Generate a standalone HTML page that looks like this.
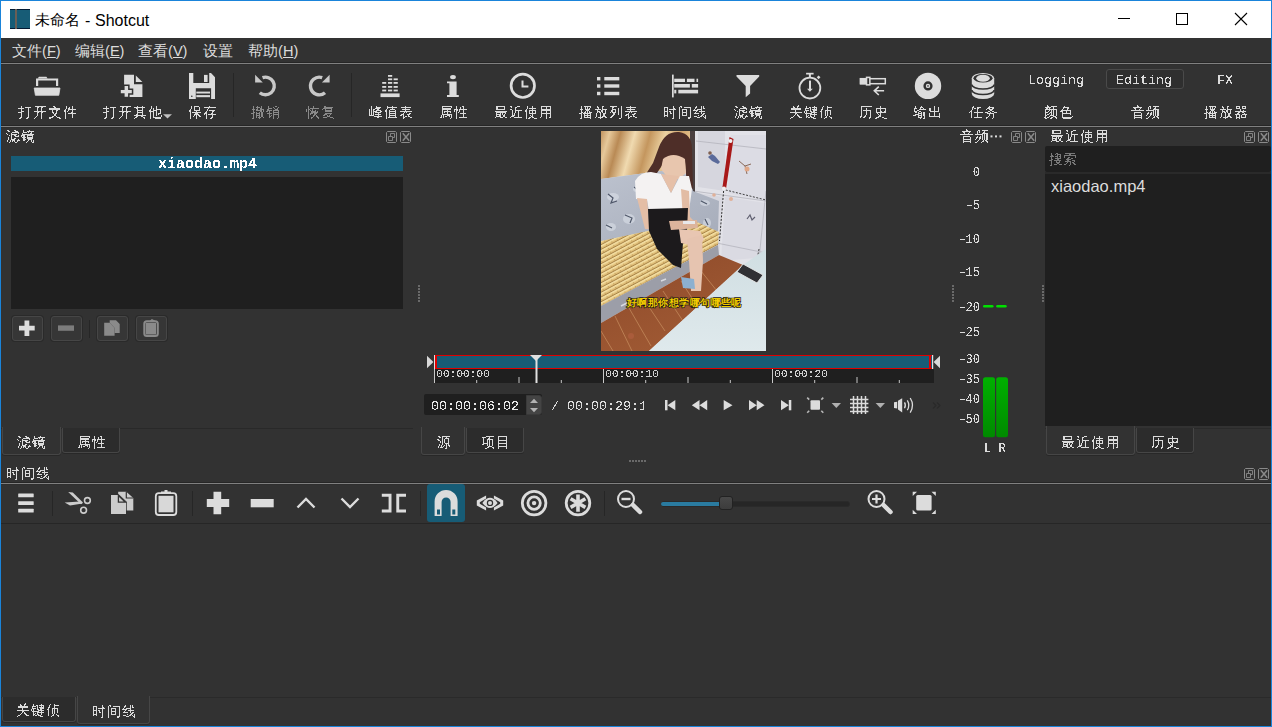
<!DOCTYPE html>
<html><head><meta charset="utf-8">
<style>
*{margin:0;padding:0;box-sizing:border-box}
html,body{width:1272px;height:727px;overflow:hidden;background:#323232;font-family:"Liberation Sans",sans-serif;color:#dcdcdc}
.a{position:absolute;white-space:nowrap;line-height:1;filter:url(#crisp)}
.ct{filter:none}
.b{position:absolute}
.m{font-family:"Liberation Mono",monospace}
.t15{font-size:15px}
.lbl{font-size:15px;color:#dcdcdc}
.dis{color:#8a8a8a}
.sep{position:absolute;background:#808080;height:1px;box-shadow:0 -1px 0 #262626,0 1px 0 #2e2e2e}
.vsep{position:absolute;width:1px;background:#262626}
.tab{position:absolute;border:1px solid #464646;border-top:none;border-radius:0 0 3px 3px;background:#2c2c2c;box-shadow:0 1px 0 #282828}
.tab.sel{background:#323232}
.dbtn{position:absolute;width:11px;height:11px;border:1px solid #9a9a9a;border-radius:2px}
</style></head><body>
<svg width="0" height="0" style="position:absolute"><filter id="crisp"><feComponentTransfer><feFuncA type="discrete" tableValues="0 0 1 1"/></feComponentTransfer></filter></svg>
<!-- window border -->
<div class="b" style="left:0;top:0;width:1272px;height:727px;border:1px solid #1a84da;z-index:50;pointer-events:none"></div>
<!-- title bar -->
<div class="b" style="left:0;top:0;width:1272px;height:38px;background:#fff"></div>
<div class="b" style="left:10px;top:9px;width:20px;height:20px;background:#175c76;border-top:1px solid #021a33;border-bottom:1px solid #021a33"></div>
<div class="b" style="left:15px;top:9px;width:1.6px;height:20px;background:#6a5e55"></div>
<div class="a ct" style="left:35px;top:13px;font-size:14.5px;color:#000">未命名</div><div class="a ct" style="left:85px;top:13px;font-size:16px;color:#000">-</div><div class="a ct" style="left:95px;top:13px;font-size:16px;color:#000">Shotcut</div>
<div class="b" style="left:1118px;top:18px;width:12px;height:1px;background:#000"></div>
<div class="b" style="left:1176px;top:13px;width:12px;height:12px;border:1px solid #000"></div>
<svg class="b" style="left:1234px;top:12px" width="14" height="14"><path d="M1 1L13 13M13 1L1 13" stroke="#000" stroke-width="1.1"/></svg>

<!-- menu bar -->
<div class="a ct" style="left:12px;top:43.5px;font-size:14.6px">文件(<u>F</u>)</div>
<div class="a ct" style="left:75px;top:43.5px;font-size:14.6px">编辑(<u>E</u>)</div>
<div class="a ct" style="left:138px;top:43.5px;font-size:14.6px">查看(<u>V</u>)</div>
<div class="a ct" style="left:203px;top:43.5px;font-size:14.6px">设置</div>
<div class="a ct" style="left:248px;top:43.5px;font-size:14.6px">帮助(<u>H</u>)</div>
<div class="sep" style="left:1px;top:63px;width:1270px"></div>

<!-- toolbar -->
<div class="a lbl" style="left:18px;top:105px;font-size:14px;letter-spacing:1px">打开文件</div>
<div class="a lbl" style="left:103px;top:105px;font-size:14px;letter-spacing:1px">打开其他</div>
<div class="a lbl" style="left:188px;top:105px;font-size:14px;letter-spacing:1px">保存</div>
<div class="a lbl dis" style="left:251px;top:105px;font-size:14px;letter-spacing:1px">撤销</div>
<div class="a lbl dis" style="left:306px;top:105px;font-size:14px;letter-spacing:1px">恢复</div>
<div class="a lbl" style="left:369px;top:105px;font-size:14px;letter-spacing:1px">峰值表</div>
<div class="a lbl" style="left:439px;top:105px;font-size:14px;letter-spacing:1px">属性</div>
<div class="a lbl" style="left:494px;top:105px;font-size:14px;letter-spacing:1px">最近使用</div>
<div class="a lbl" style="left:579px;top:105px;font-size:14px;letter-spacing:1px">播放列表</div>
<div class="a lbl" style="left:663px;top:105px;font-size:14px;letter-spacing:1px">时间线</div>
<div class="a lbl" style="left:734px;top:105px;font-size:14px;letter-spacing:1px">滤镜</div>
<div class="a lbl" style="left:789px;top:105px;font-size:14px;letter-spacing:1px">关键侦</div>
<div class="a lbl" style="left:859px;top:105px;font-size:14px;letter-spacing:1px">历史</div>
<div class="a lbl" style="left:913px;top:105px;font-size:14px;letter-spacing:1px">输出</div>
<div class="a lbl" style="left:969px;top:105px;font-size:14px;letter-spacing:1px">任务</div>
<div class="a lbl" style="left:1044px;top:105px;font-size:14px;letter-spacing:1px">颜色</div>
<div class="a lbl" style="left:1131px;top:105px;font-size:14px;letter-spacing:1px">音频</div>
<div class="a lbl" style="left:1204px;top:105px;font-size:14px;letter-spacing:1px">播放器</div>
<div class="a m" style="left:1028px;top:74px;font-size:13.33px">Logging</div>
<div class="b" style="left:1106px;top:69px;width:78px;height:20px;border:1px solid #4a4a4a;border-radius:3px;background:#2f2f2f"></div>
<div class="a m" style="left:1116px;top:74px;font-size:13.33px">Editing</div>
<div class="a m" style="left:1217px;top:74px;font-size:13.33px">FX</div>
<div class="vsep" style="left:233px;top:73px;height:44px"></div>
<div class="vsep" style="left:351px;top:73px;height:44px"></div>
<svg class="b" style="left:0;top:0" width="1272" height="130" fill="#dcdcdc">
<!-- folder -->
<path d="M37.5 78.6L39 76.8H46.4L47.6 78.6Z"/>
<path d="M37.1 86V79.5H57.1V86" fill="none" stroke="#dcdcdc" stroke-width="2.2"/>
<path d="M34.2 88H60L58.8 95.3H35.4Z" stroke="#dcdcdc" stroke-width="0.8" stroke-linejoin="round"/>
<!-- open other -->
<path d="M124.1 74.8H134V84.2H142.4V97.1H124.1Z"/>
<path d="M135.8 75.5L142.4 82.1H135.8Z"/>
<path d="M120.8 90H124.6V86.1H128.1V90H131.8V93.3H128.1V96.8H124.6V93.3H120.8Z" stroke="#323232" stroke-width="3" paint-order="stroke"/>
<!-- save -->
<path fill-rule="evenodd" d="M189 73H211L215 77.2V99H189Z M193.3 73H209.2V82.9H193.3Z M195.8 88.3H211.1V99H195.8Z"/>
<rect x="204" y="74.9" width="3.6" height="7.1"/>
<rect x="196.3" y="91.6" width="13.7" height="1.9"/><rect x="196.3" y="95.1" width="13.7" height="2.1"/>
<circle cx="191.8" cy="96.2" r="0.8" fill="#323232"/>
<!-- undo -->
<path d="M262.5 77.7A8.8 8.8 0 1 1 259.8 92.7" fill="none" stroke="#c8c8c8" stroke-width="3.4"/>
<path d="M255.1 74.7V82.5H262.8Z" fill="#c8c8c8"/>
<!-- redo -->
<path d="M322.2 77.7A8.8 8.8 0 1 0 325 92.7" fill="none" stroke="#c8c8c8" stroke-width="3.4"/>
<path d="M329.6 74.7V82.5H321.9Z" fill="#c8c8c8"/>
<!-- peak meter -->
<rect x="380.5" y="93.4" width="19.1" height="3.7"/>
<rect x="388" y="75" width="4.2" height="1.8"/>
<rect x="388" y="78.4" width="4.2" height="1.8"/><rect x="393.6" y="78.4" width="4.2" height="1.8"/>
<rect x="382.2" y="82" width="4" height="1.8"/><rect x="388" y="82" width="4.2" height="1.8"/><rect x="393.6" y="82" width="4.2" height="1.8"/>
<rect x="382.2" y="86" width="4" height="1.8"/><rect x="388" y="86" width="4.2" height="1.8"/><rect x="393.6" y="86" width="4.2" height="1.8"/>
<rect x="382.2" y="89.6" width="4" height="1.8"/><rect x="388" y="89.6" width="4.2" height="1.8"/><rect x="393.6" y="89.6" width="4.2" height="1.8"/>
<!-- info -->
<ellipse cx="453" cy="77.1" rx="2.9" ry="2.2"/>
<path d="M447 81.4H456.6V95H458.8V97H447V95H449.4V83.2H447Z"/>
<!-- clock -->
<circle cx="522.8" cy="85.8" r="11.7" fill="none" stroke="#dcdcdc" stroke-width="2.7"/>
<path d="M521.5 80.4H523.5V85.5H528.4V87.5H521.5Z"/>
<!-- list -->
<rect x="597" y="77" width="3.4" height="3.4"/><rect x="597" y="84.3" width="3.4" height="3.4"/><rect x="597" y="91.8" width="3.4" height="3.4"/>
<rect x="604.3" y="77" width="15" height="3.4"/><rect x="604.3" y="84.3" width="15" height="3.4"/><rect x="604.3" y="91.8" width="15" height="3.4"/>
<!-- timeline -->
<rect x="672" y="74.6" width="1.7" height="22.8"/>
<rect x="674.2" y="78.7" width="10.8" height="3.3"/><rect x="686.9" y="78.7" width="7.6" height="3.3"/><rect x="696.5" y="78.7" width="1.6" height="3.3"/>
<rect x="674.2" y="84" width="15.7" height="3.6"/><rect x="691.8" y="84" width="6.3" height="3.6"/>
<rect x="674.2" y="89.8" width="2.1" height="3.6"/><rect x="678.3" y="89.8" width="19.8" height="3.6"/>
<!-- filter -->
<path d="M736.5 74.9H759.2V76.6L750.1 86V93.5L745.7 97.2V86L736.5 76.6Z"/>
<!-- stopwatch -->
<circle cx="809.9" cy="88.1" r="10.4" fill="none" stroke="#dcdcdc" stroke-width="1.8"/>
<rect x="806.1" y="72.8" width="7.5" height="1.7"/><rect x="808.9" y="74" width="2" height="3.5"/>
<rect x="817.3" y="76" width="2.6" height="2.6" transform="rotate(45 818.6 77.3)"/>
<rect x="809" y="80.6" width="2" height="8.5"/><path d="M807 88.8H812.8L809.9 91.8Z"/>
<!-- history -->
<rect x="860.5" y="78.7" width="24.8" height="5" fill="none" stroke="#dcdcdc" stroke-width="1.5"/>
<rect x="859.8" y="78" width="7" height="6.4"/>
<rect x="865.8" y="76.6" width="4.8" height="9"/><rect x="867.3" y="78.2" width="1.8" height="5.9" fill="#323232"/>
<path d="M884.1 90.8H874.5M878.8 86.6L874.3 90.8L878.8 95" fill="none" stroke="#dcdcdc" stroke-width="1.6"/>
<!-- disc -->
<circle cx="928" cy="85.9" r="13.2"/>
<circle cx="928" cy="85.9" r="3.4" fill="none" stroke="#323232" stroke-width="2.4"/>
<circle cx="928" cy="85.9" r="0.9" fill="#555"/>
<!-- jobs -->
<path d="M971.8 78.2A11.2 5.2 0 0 1 994.2 78.2V93.8A11.2 5.2 0 0 1 971.8 93.8Z"/>
<ellipse cx="983" cy="78.3" rx="9.6" ry="4.2" fill="#323232"/>
<ellipse cx="983" cy="78.3" rx="6.8" ry="3.5"/>
<path d="M971.8 84.5A11.2 4.5 0 0 0 994.2 84.5M971.8 90A11.2 4.5 0 0 0 994.2 90" fill="none" stroke="#323232" stroke-width="1.6"/>
<!-- dropdown arrow 打开其他 -->
<path d="M163 114.2H172L167.5 118.6Z" fill="#c0c0c0"/>
</svg>
<div class="sep" style="left:1px;top:126px;width:1270px"></div>

<div class="a" style="left:6px;top:129px;font-size:14px;letter-spacing:1px">滤镜</div>
<svg class="b" style="left:386px;top:131px" width="26" height="12">
<path d="M1.5 0.5H9.5L10.5 1.5V10.5L9.5 11.5H1.5L0.5 10.5V1.5Z" fill="none" stroke="#8a8a8a"/>
<path d="M2.5 5.5H6.5V9.5H2.5Z M4.5 5.5V2.5H8.5V6.5H6.5" fill="none" stroke="#8a8a8a" stroke-width="0.9"/>
<path d="M15.5 0.5H23.5L24.5 1.5V10.5L23.5 11.5H15.5L14.5 10.5V1.5Z" fill="none" stroke="#8a8a8a"/>
<path d="M16.8 2.3L23.2 9.7M23.2 2.3L16.8 9.7" stroke="#8a8a8a" stroke-width="1.5"/>
</svg>
<div class="b" style="left:11px;top:156px;width:392px;height:15px;background:#175c76"></div>
<div class="a m" style="left:158px;top:157px;font-size:15px;font-weight:bold;color:#fff">xiaodao.mp4</div>
<div class="b" style="left:11px;top:177px;width:392px;height:132px;background:#1f1f1f"></div>
<div class="b" style="left:12px;top:316px;width:31px;height:25px;border:1px solid #464646;border-radius:3px;background:#363636;box-shadow:0 0 0 1px #2a2a2a"></div>
<div class="b" style="left:51px;top:316px;width:31px;height:25px;border:1px solid #464646;border-radius:3px;background:#363636;box-shadow:0 0 0 1px #2a2a2a"></div>
<div class="b" style="left:97px;top:316px;width:31px;height:25px;border:1px solid #464646;border-radius:3px;background:#363636;box-shadow:0 0 0 1px #2a2a2a"></div>
<div class="b" style="left:136px;top:316px;width:31px;height:25px;border:1px solid #464646;border-radius:3px;background:#363636;box-shadow:0 0 0 1px #2a2a2a"></div>
<div class="vsep" style="left:89px;top:320px;height:18px;background:#262626"></div>
<svg class="b" style="left:0;top:300px" width="200" height="50">
<path d="M24.5 20.4H29.3V25.8H34.7V30.6H29.3V36H24.5V30.6H19V25.8H24.5Z" fill="#dcdcdc"/>
<rect x="58" y="25.4" width="16" height="5.4" fill="#7c7c7c"/>
<path d="M109.7 20.2H116L119.7 24V33H114.6V27.9L109.7 22.8Z" fill="#8a8a8a"/>
<path d="M104.2 22.8H109.8L114.6 27.9V35.7H104.2Z" fill="#8a8a8a"/>
<rect x="144.3" y="21.2" width="13.5" height="14.7" rx="2.5" fill="none" stroke="#8a8a8a" stroke-width="2"/>
<rect x="145.7" y="22.8" width="10.4" height="11.7" fill="#8a8a8a"/>
<path d="M148.7 22H154.9V20.5L151.8 19Z" fill="#8a8a8a"/>
</svg>
<svg class="b" style="left:418px;top:285px" width="2" height="18" fill="#6a6a6a"><rect x="0" y="0" width="2" height="2"/><rect x="0" y="3" width="2" height="2"/><rect x="0" y="6" width="2" height="2"/><rect x="0" y="9" width="2" height="2"/><rect x="0" y="12" width="2" height="2"/><rect x="0" y="15" width="2" height="2"/></svg>
<div class="b" style="left:1px;top:428px;width:412px;height:1px;background:#292929"></div>
<div class="tab sel" style="left:2px;top:427px;width:59px;height:28px"></div>
<div class="tab" style="left:62px;top:428px;width:58px;height:25px"></div>
<div class="a" style="left:17px;top:435px;font-size:14px;letter-spacing:1px">滤镜</div>
<div class="a" style="left:77px;top:435px;font-size:14px;letter-spacing:1px">属性</div>
<div class="a" style="left:6px;top:466px;font-size:14px;letter-spacing:1px">时间线</div>
<svg class="b" style="left:1244px;top:468px" width="26" height="12">
<path d="M1.5 0.5H9.5L10.5 1.5V10.5L9.5 11.5H1.5L0.5 10.5V1.5Z" fill="none" stroke="#8a8a8a"/>
<path d="M2.5 5.5H6.5V9.5H2.5Z M4.5 5.5V2.5H8.5V6.5H6.5" fill="none" stroke="#8a8a8a" stroke-width="0.9"/>
<path d="M15.5 0.5H23.5L24.5 1.5V10.5L23.5 11.5H15.5L14.5 10.5V1.5Z" fill="none" stroke="#8a8a8a"/>
<path d="M16.8 2.3L23.2 9.7M23.2 2.3L16.8 9.7" stroke="#8a8a8a" stroke-width="1.5"/>
</svg>
<div class="sep" style="left:1px;top:483px;width:1270px"></div>
<svg class="b" style="left:601px;top:131px" width="165" height="220" viewBox="0 0 165 220">
<defs>
<linearGradient id="cur" x1="0" y1="0" x2="1" y2="0.15">
<stop offset="0" stop-color="#c29460"/><stop offset="0.1" stop-color="#e6c89a"/><stop offset="0.22" stop-color="#b98a55"/><stop offset="0.38" stop-color="#f0dab0"/><stop offset="0.55" stop-color="#c4965e"/><stop offset="0.72" stop-color="#ecd2a2"/><stop offset="0.88" stop-color="#d0a46c"/><stop offset="1" stop-color="#e4c08a"/>
</linearGradient>
<pattern id="bam" width="6" height="4.2" patternUnits="userSpaceOnUse" patternTransform="rotate(-28)">
<rect width="6" height="4.2" fill="#e6c680"/><rect y="0" width="6" height="1.6" fill="#f2dca0"/><rect y="3.2" width="6" height="1" fill="#a88448"/><rect x="5" y="1.6" width="1" height="1.6" fill="#c8a460"/>
</pattern>
<linearGradient id="flr" x1="0" y1="0" x2="0.6" y2="1"><stop offset="0" stop-color="#8e4a2a"/><stop offset="1" stop-color="#a05a34"/></linearGradient>
<linearGradient id="tbl" x1="0" y1="0" x2="0" y2="1"><stop offset="0" stop-color="#d0dee2"/><stop offset="1" stop-color="#dfe9ec"/></linearGradient>
<linearGradient id="sofa" x1="0" y1="0" x2="1" y2="1"><stop offset="0" stop-color="#bcc2ce"/><stop offset="1" stop-color="#a6acba"/></linearGradient>
</defs>
<rect width="165" height="220" fill="#dcdde2"/>
<!-- cabinets right -->
<path d="M90 0H165V150L140 133L90 120Z" fill="#e2e2e8"/>
<path d="M97 0H124V60L97 56Z" fill="#d6d6de"/><path d="M130 4H165V70L127 62Z" fill="#dcdce4"/>
<path d="M98 62L122 66L118 128L98 122Z" fill="#d8d8e0"/><path d="M124 66L165 72V126L120 130Z" fill="#dadae2"/>
<path d="M95 10L165 18M92 60L165 70M96 108L165 122M165 60L158 128" stroke="#b4b4bc" stroke-width="0.8" fill="none"/>
<path d="M122.6 60L118.5 110" stroke="#303030" stroke-width="1" stroke-dasharray="2 1.5"/>
<path d="M124.7 59L165 69" stroke="#303030" stroke-width="0.9" stroke-dasharray="2 1.5"/>
<path d="M158 118L150 160" stroke="#303030" stroke-width="0.9" stroke-dasharray="2 1.5"/>
<path d="M128.5 6L132.5 8L125 58L121.5 56Z" fill="#a81818"/>
<circle cx="129.5" cy="10" r="2" fill="#f0f0f0"/><circle cx="123" cy="57.5" r="2" fill="#f0f0f0"/>
<path d="M107 26l4 -3l3 2l5 6l-2 2l-6 -3Z" fill="#5a6a9a"/><circle cx="109" cy="22" r="1.8" fill="#806050"/>
<path d="M138 30l6 5l6 -2M144 35l2 8" stroke="#8a6a5a" stroke-width="1" fill="none"/><circle cx="146" cy="38" r="2.5" fill="#e0a888"/>
<circle cx="113" cy="64" r="1.8" fill="#e0b098"/><circle cx="130" cy="68" r="2" fill="#e0b098"/>
<path d="M146 88l3 -4l2 5l3 -3M104 100l3 4l3 -3" stroke="#606070" stroke-width="1.2" fill="none"/>
<rect x="88" y="0" width="6" height="80" fill="#4a4040"/>
<!-- curtain -->
<path d="M0 0H89V38L60 40L0 48Z" fill="url(#cur)"/>
<!-- sofa back -->
<path d="M0 48L60 40L88 44L92 60L118 70L117 101L60 100L0 112Z" fill="url(#sofa)"/>
<g fill="#dfe4ec" opacity="0.55"><ellipse cx="12" cy="66" rx="6" ry="4"/><ellipse cx="28" cy="88" rx="6" ry="5"/><ellipse cx="10" cy="96" rx="5" ry="4"/><ellipse cx="36" cy="58" rx="4" ry="3"/><ellipse cx="104" cy="72" rx="5" ry="3"/><ellipse cx="106" cy="92" rx="4" ry="5"/></g>
<path d="M7 63l5 4l-2 5l6 -2M24 84l7 3l-2 5M5 94l6 3M33 56l5 4M100 70l6 3M104 88l3 6" stroke="#50586a" stroke-width="1.2" fill="none"/>
<!-- bamboo seat -->
<path d="M0 110L70 95L96 91L118 101L117 114L0 175Z" fill="url(#bam)"/>
<!-- sofa base -->
<path d="M0 175L117 114L118 124L0 192Z" fill="#9c9ea8"/>
<path d="M20 175l6 -3M60 150l5 -2M90 132l4 -1" stroke="#d8dae0" stroke-width="1.4"/>
<!-- floor -->
<path d="M0 192L118 124L142 134L48 220H0Z" fill="url(#flr)"/>
<path d="M28 177L50 215M14 185L31 220M44 170L64 200M62 160L82 190M80 150L98 178M100 140L116 160M0 200L12 220" stroke="#d09a68" stroke-width="0.7" opacity="0.85" fill="none"/>
<circle cx="30" cy="205" r="3" fill="#b06040" opacity="0.7"/>
<!-- table -->
<path d="M48 220L142 134L165 118V220Z" fill="url(#tbl)"/>
<!-- phone -->
<path d="M136 141L142 133L162 144L156 152Z" fill="#303034" stroke="#e8e8e8" stroke-width="0.9"/>
<!-- woman: hair -->
<path d="M58 16Q64 0 78 1Q91 3 91 18L92 58L86 54L84 32Q76 22 64 30L56 42L43 46L52 32Z" fill="#4e2e28"/>
<!-- face -->
<path d="M62 28Q72 20 84 28L85 42L78 48L67 47L60 38Z" fill="#e8c6ae"/>
<!-- white top -->
<path d="M34 50Q39 41 50 41L60 43L70 62L79 45L88 45L91 58L88 80L48 80L46 69L35 68Z" fill="#f4f2f2"/>
<path d="M60 43L70 62L78 45Z" fill="#e6c0a8"/>
<!-- left arm -->
<path d="M36 67L46 68L48 90L64 95L64 99L44 98Z" fill="#e4bea6"/>
<!-- right arm -->
<path d="M80 58L88 60L89 86L95 92L88 95L82 88Z" fill="#e2bca4"/>
<!-- skirt -->
<path d="M47 78L87 77L86 100L80 100L82 112L80 137L72 134L56 118L48 100Z" fill="#1c1a1c"/>
<!-- thigh + shin -->
<path d="M78 98L99 100L103 108L98 116L80 112Z" fill="#e8c6b2"/>
<path d="M86 108L101 104L102 130L100 160L90 160L88 130Z" fill="#e6c4b0"/>
<!-- hands -->
<path d="M68 90L96 89L97 97L70 99Z" fill="#dcb49c"/>
<path d="M82 90L94 90L94 93L82 93Z" fill="#e8e8ea"/>
<!-- slipper -->
<path d="M80 146L93 148L94 158L82 157Z" fill="#8cb0d0"/>
<!-- subtitle -->
<text x="83.4" y="175.3" text-anchor="middle" font-family="Liberation Sans" font-size="10.2" font-weight="bold" fill="#f2cc00" stroke="#151515" stroke-width="1.3" paint-order="stroke" letter-spacing="0.45">好啊那你想学哪句哪些呢</text>
</svg>
<svg class="b" style="left:420px;top:350px" width="530" height="40"><path d="M7 5.7L13.4 12L7 18.3Z" fill="#d8d8d8"/><path d="M520 5.7L513.6 12L520 18.3Z" fill="#d8d8d8"/><rect x="14" y="19" width="500" height="14" fill="#1f1f1f"/><rect x="14" y="5" width="498" height="14" fill="#175c76"/><rect x="14" y="5" width="498" height="1" fill="#e00000"/><rect x="14" y="18" width="498" height="1" fill="#e00000"/><rect x="15" y="5" width="2" height="14" fill="#e00000"/><rect x="509" y="5" width="2" height="14" fill="#e00000"/><rect x="14" y="5" width="1" height="28" fill="#e0e0e0"/><rect x="512" y="5" width="1.2" height="14" fill="#e0e0e0"/><rect x="14.0" y="19" width="1" height="14" fill="#c8c8c8"/><rect x="56.2" y="30" width="1" height="3" fill="#c8c8c8"/><rect x="98.5" y="27" width="1" height="6" fill="#c8c8c8"/><rect x="140.8" y="30" width="1" height="3" fill="#c8c8c8"/><rect x="183.0" y="19" width="1" height="14" fill="#c8c8c8"/><rect x="225.2" y="30" width="1" height="3" fill="#c8c8c8"/><rect x="267.5" y="27" width="1" height="6" fill="#c8c8c8"/><rect x="309.8" y="30" width="1" height="3" fill="#c8c8c8"/><rect x="352.0" y="19" width="1" height="14" fill="#c8c8c8"/><rect x="394.2" y="30" width="1" height="3" fill="#c8c8c8"/><rect x="436.5" y="27" width="1" height="6" fill="#c8c8c8"/><rect x="478.8" y="30" width="1" height="3" fill="#c8c8c8"/><path d="M110 5H122L116 11Z" fill="#e0e0e0"/><rect x="115.5" y="5" width="2" height="28" fill="#e0e0e0"/></svg>
<div class="a m" style="left:436px;top:369px;font-size:11.7px;color:#d0d0d0;letter-spacing:-0.3px">00:00:00</div>
<div class="a m" style="left:605px;top:369px;font-size:11.7px;color:#d0d0d0;letter-spacing:-0.3px">00:00:10</div>
<div class="a m" style="left:774px;top:369px;font-size:11.7px;color:#d0d0d0;letter-spacing:-0.3px">00:00:20</div>
<div class="b" style="left:424px;top:394px;width:118px;height:21px;background:#1f1f1f;border-radius:2px"></div>
<div class="b" style="left:526px;top:395px;width:16px;height:20px;background:#444;border:1px solid #3a3a3a;border-radius:0 3px 3px 0"></div>
<svg class="b" style="left:526px;top:395px" width="16" height="20"><path d="M4 8H12L8 3.8Z M4 13H12L8 17.2Z" fill="#b4b4b4"/></svg>
<div class="a m" style="left:431px;top:400px;font-size:13.33px;color:#e6e6e6">00:00:06:02</div>
<div class="a m" style="left:551px;top:400px;font-size:13.33px;color:#dcdcdc">/</div>
<div class="b" style="left:560px;top:394px;width:84px;height:22px;overflow:hidden"><div class="a m" style="left:7px;top:6px;font-size:13.33px;color:#dcdcdc">00:00:29:10</div></div>
<svg class="b" style="left:650px;top:385px" width="280" height="40" fill="#dcdcdc">
<rect x="15" y="15" width="2.5" height="10.3"/><path d="M25.3 15V25.3L17.5 20.15Z"/>
<path d="M41.8 20.15L49.5 15V25.3Z M49.5 20.15L57.2 15V25.3Z"/>
<path d="M73.7 15V25.3L82.5 20.15Z"/>
<path d="M99 15V25.3L106.7 20.15Z M106.7 15V25.3L114.5 20.15Z"/>
<path d="M131 15V25.3L138.8 20.15Z"/><rect x="138.8" y="15" width="2.5" height="10.3"/>
<rect x="160.5" y="15.3" width="9.5" height="9.5" rx="1"/>
<path d="M157.2 12.6L159.2 14.6M173.3 12.6L171.3 14.6M157.2 27.8L159.2 25.8M173.3 27.8L171.3 25.8" stroke="#b8b8b8" stroke-width="1.6" fill="none"/>
<path d="M181.6 18H191L186.3 23Z" fill="#b0b0b0"/>
<path d="M200 14.5H218.4M200 18.5H218.4M200 22.5H218.4M200 26.5H218.4M203.5 11V29M207.5 11V29M211.5 11V29M215.5 11V29" stroke="#dcdcdc" stroke-width="1.5"/>
<path d="M225.6 18H235L230.3 23Z" fill="#b0b0b0"/>
<path d="M244 17.3L247.2 16.8V23.6L244 23.1Z M248 15.8L252.2 13.2V27.4L248 24.6Z"/>
<path d="M254.5 17.3Q256.2 20.2 254.5 23.2M257.3 15.3Q260.3 20.2 257.3 25.2M260.2 13Q264.8 20.2 260.2 27.6" stroke="#dcdcdc" stroke-width="1.3" fill="none"/>
</svg>

<div class="tab sel" style="left:421px;top:427px;width:44px;height:28px"></div>
<div class="tab" style="left:466px;top:428px;width:58px;height:25px"></div>
<div class="a" style="left:437px;top:435px;font-size:14px;letter-spacing:1px">源</div>
<div class="a" style="left:481px;top:435px;font-size:14px;letter-spacing:1px">项目</div>
<svg class="b" style="left:629px;top:460px" width="18" height="2" fill="#6a6a6a"><rect x="0" y="0" width="2" height="2"/><rect x="3" y="0" width="2" height="2"/><rect x="6" y="0" width="2" height="2"/><rect x="9" y="0" width="2" height="2"/><rect x="12" y="0" width="2" height="2"/><rect x="15" y="0" width="2" height="2"/></svg>
<div class="a" style="left:960px;top:129px;font-size:14px;letter-spacing:1px">音频</div><svg class="b" style="left:990px;top:135px" width="12" height="3" fill="#dcdcdc"><rect x="0.5" y="0.4" width="2" height="2"/><rect x="5" y="0.4" width="2" height="2"/><rect x="9.5" y="0.4" width="2" height="2"/></svg>
<svg class="b" style="left:1011px;top:131px" width="26" height="12">
<path d="M1.5 0.5H9.5L10.5 1.5V10.5L9.5 11.5H1.5L0.5 10.5V1.5Z" fill="none" stroke="#8a8a8a"/>
<path d="M2.5 5.5H6.5V9.5H2.5Z M4.5 5.5V2.5H8.5V6.5H6.5" fill="none" stroke="#8a8a8a" stroke-width="0.9"/>
<path d="M15.5 0.5H23.5L24.5 1.5V10.5L23.5 11.5H15.5L14.5 10.5V1.5Z" fill="none" stroke="#8a8a8a"/>
<path d="M16.8 2.3L23.2 9.7M23.2 2.3L16.8 9.7" stroke="#8a8a8a" stroke-width="1.5"/>
</svg>
<div class="a m" style="left:939px;top:167px;width:41px;text-align:right;font-size:12px;color:#dcdcdc"> 0</div>
<div class="a m" style="left:939px;top:200px;width:41px;text-align:right;font-size:12px;color:#dcdcdc">−5</div>
<div class="a m" style="left:939px;top:234px;width:41px;text-align:right;font-size:12px;color:#dcdcdc">−10</div>
<div class="a m" style="left:939px;top:267px;width:41px;text-align:right;font-size:12px;color:#dcdcdc">−15</div>
<div class="a m" style="left:939px;top:302px;width:41px;text-align:right;font-size:12px;color:#dcdcdc">−20</div>
<div class="a m" style="left:939px;top:327px;width:41px;text-align:right;font-size:12px;color:#dcdcdc">−25</div>
<div class="a m" style="left:939px;top:354px;width:41px;text-align:right;font-size:12px;color:#dcdcdc">−30</div>
<div class="a m" style="left:939px;top:374px;width:41px;text-align:right;font-size:12px;color:#dcdcdc">−35</div>
<div class="a m" style="left:939px;top:394px;width:41px;text-align:right;font-size:12px;color:#dcdcdc">−40</div>
<div class="a m" style="left:939px;top:414px;width:41px;text-align:right;font-size:12px;color:#dcdcdc">−50</div>
<svg class="b" style="left:980px;top:300px" width="30" height="160">
<defs><linearGradient id="gm" x1="0" y1="0" x2="0" y2="1"><stop offset="0" stop-color="#00b000"/><stop offset="1" stop-color="#008a00"/></linearGradient></defs>
<rect x="3" y="5" width="10.5" height="2.6" rx="1.3" fill="#00e000"/>
<rect x="16.2" y="5" width="10.5" height="2.6" rx="1.3" fill="#00e000"/>
<rect x="3" y="77.3" width="12" height="60" rx="2.5" fill="url(#gm)"/>
<rect x="16.2" y="77.3" width="11.8" height="60" rx="2.5" fill="url(#gm)"/>
</svg>
<div class="a m" style="left:984px;top:443px;font-size:12px;color:#dcdcdc">L R</div>
<svg class="b" style="left:952px;top:285px" width="2" height="18" fill="#6a6a6a"><rect x="0" y="0" width="2" height="2"/><rect x="0" y="3" width="2" height="2"/><rect x="0" y="6" width="2" height="2"/><rect x="0" y="9" width="2" height="2"/><rect x="0" y="12" width="2" height="2"/><rect x="0" y="15" width="2" height="2"/></svg>
<svg class="b" style="left:1042px;top:285px" width="2" height="18" fill="#6a6a6a"><rect x="0" y="0" width="2" height="2"/><rect x="0" y="3" width="2" height="2"/><rect x="0" y="6" width="2" height="2"/><rect x="0" y="9" width="2" height="2"/><rect x="0" y="12" width="2" height="2"/><rect x="0" y="15" width="2" height="2"/></svg>
<div class="a" style="left:1050px;top:129px;font-size:14px;letter-spacing:1px">最近使用</div>
<svg class="b" style="left:1244px;top:131px" width="26" height="12">
<path d="M1.5 0.5H9.5L10.5 1.5V10.5L9.5 11.5H1.5L0.5 10.5V1.5Z" fill="none" stroke="#8a8a8a"/>
<path d="M2.5 5.5H6.5V9.5H2.5Z M4.5 5.5V2.5H8.5V6.5H6.5" fill="none" stroke="#8a8a8a" stroke-width="0.9"/>
<path d="M15.5 0.5H23.5L24.5 1.5V10.5L23.5 11.5H15.5L14.5 10.5V1.5Z" fill="none" stroke="#8a8a8a"/>
<path d="M16.8 2.3L23.2 9.7M23.2 2.3L16.8 9.7" stroke="#8a8a8a" stroke-width="1.5"/>
</svg>
<div class="b" style="left:1045px;top:172px;width:226px;height:2px;background:#2a2a2a"></div><div class="b" style="left:1045px;top:146px;width:226px;height:26px;background:#1f1f1f;border-radius:2px"></div>
<div class="a" style="left:1049px;top:152px;font-size:14px;color:#7a7a7a">搜索</div>
<div class="b" style="left:1045px;top:174px;width:226px;height:252px;background:#1f1f1f"></div>
<div class="a ct" style="left:1051px;top:178px;font-size:16.5px;color:#dcdcdc">xiaodao.mp4</div>
<div class="b" style="left:1045px;top:428px;width:226px;height:1px;background:#2a2a2a"></div>
<div class="tab sel" style="left:1046px;top:426px;width:89px;height:29px"></div>
<div class="tab" style="left:1136px;top:428px;width:58px;height:25px"></div>
<div class="a" style="left:1061px;top:435px;font-size:14px;letter-spacing:1px">最近使用</div>
<div class="a" style="left:1151px;top:435px;font-size:14px;letter-spacing:1px">历史</div>
<div class="b" style="left:1px;top:523px;width:1270px;height:1px;background:#262626"></div>
<div class="vsep" style="left:52px;top:491px;height:25px"></div>
<div class="vsep" style="left:192px;top:491px;height:25px"></div>
<div class="vsep" style="left:420px;top:491px;height:25px"></div>
<div class="vsep" style="left:604px;top:491px;height:25px"></div>
<div class="b" style="left:427px;top:484px;width:38px;height:38px;background:#175c76;border-radius:3px"></div>
<svg class="b" style="left:0;top:480px" width="960" height="44" fill="#dcdcdc">
<!-- menu -->
<rect x="18.2" y="13.5" width="15.5" height="3.8" rx="0.5"/><rect x="18.2" y="21.2" width="15.5" height="3.8" rx="0.5"/><rect x="18.2" y="28.8" width="15.5" height="3.8" rx="0.5"/>
<!-- scissors -->
<path d="M68.2 12L72.8 12.4L83 22.6L81 24.2Z" fill="#cccccc"/>
<path d="M64.7 22.6L80 21.4L82.6 23.6L70 25.4Z" fill="#cccccc"/>
<circle cx="87.4" cy="20.5" r="2.9" fill="none" stroke="#cccccc" stroke-width="1.6"/>
<circle cx="83.6" cy="30.2" r="2.9" fill="none" stroke="#cccccc" stroke-width="1.6"/>
<!-- copy -->
<path d="M118.2 11.8H126.3L133.3 18V30.5H118.2Z" fill="#cccccc"/>
<path d="M126.3 11.8V18H133.3" fill="none" stroke="#323232" stroke-width="1.2"/>
<path d="M111 15.1H118.4L126 22.2V34H111Z" fill="#cccccc" stroke="#323232" stroke-width="1.5" paint-order="stroke"/>
<path d="M118.4 15.6V22.2H125.4Z" fill="#cccccc" stroke="#323232" stroke-width="1.3" stroke-linejoin="miter"/>
<!-- paste -->
<rect x="155.8" y="13.2" width="20.5" height="21.8" rx="3" fill="none" stroke="#dcdcdc" stroke-width="1.8"/>
<rect x="158.5" y="15.8" width="15" height="16.5" fill="#d8d8d8"/>
<path d="M161 13.5H171V11.5H167.5V10H164.5V11.5H161Z"/>
<!-- plus -->
<path d="M213.5 11.8H221.2V19H229.2V27H221.2V34.2H213.5V27H206.8V19H213.5Z"/>
<!-- minus -->
<rect x="250.7" y="19" width="23" height="8.3"/>
<!-- up -->
<path d="M297.5 27.5L306 19L314.5 27.5" fill="none" stroke="#dcdcdc" stroke-width="2.4"/>
<!-- down -->
<path d="M341.5 18.5L350 27L358.5 18.5" fill="none" stroke="#dcdcdc" stroke-width="2.4"/>
<!-- ripple split -->
<path d="M381.8 13.8H391.5V32.5H381.8V29.6H388.6V16.7H381.8Z M406 13.8H396.3V32.5H406V29.6H399.2V16.7H406Z"/>
<!-- magnet -->
<path d="M434.6 36V21.5A11.5 11.5 0 0 1 457.6 21.5V36H450.6V22A4.5 4.5 0 0 0 441.6 22V36Z"/>
<rect x="437" y="29.5" width="3" height="5" fill="#175c76"/><rect x="452.3" y="29.5" width="3" height="5" fill="#175c76"/>
<!-- eye -->
<path d="M486.1 15.4V18.4L479.8 22.2V23.8L486.1 27.6V30.6L476.8 25.4V20.6Z M493.9 15.4V18.4L500.2 22.2V23.8L493.9 27.6V30.6L503.2 25.4V20.6Z"/>
<path d="M482.4 22.9Q490 12.8 497.6 22.9Q490 33 482.4 22.9Z"/>
<circle cx="490" cy="22.9" r="2.6" fill="none" stroke="#323232" stroke-width="1.2"/>
<!-- target -->
<circle cx="534.1" cy="23.1" r="11.8" fill="none" stroke="#dcdcdc" stroke-width="2.8"/>
<circle cx="534.1" cy="23.1" r="6.2" fill="none" stroke="#dcdcdc" stroke-width="2.8"/>
<circle cx="534.1" cy="23.1" r="2.2"/>
<!-- asterisk -->
<circle cx="578" cy="23.1" r="11.8" fill="none" stroke="#dcdcdc" stroke-width="2.8"/>
<path d="M578 14.5V31.7M570.6 18.8L585.4 27.4M585.4 18.8L570.6 27.4" stroke="#dcdcdc" stroke-width="3.6"/>
<!-- zoom out -->
<circle cx="626" cy="19" r="8" fill="none" stroke="#dcdcdc" stroke-width="2"/>
<rect x="621.5" y="17.8" width="9" height="2.4"/>
<path d="M633 25L640 32" stroke="#dcdcdc" stroke-width="4.5" stroke-linecap="round"/>
<!-- zoom in -->
<circle cx="876.5" cy="19" r="8" fill="none" stroke="#dcdcdc" stroke-width="2"/>
<path d="M872 19H881M876.5 14.5V23.5" stroke="#dcdcdc" stroke-width="2.2"/>
<path d="M883.5 25L890.5 32" stroke="#dcdcdc" stroke-width="4.5" stroke-linecap="round"/>
<!-- fit -->
<rect x="916.2" y="15.1" width="15.4" height="15.4" rx="1.5"/>
<path d="M912.7 11.8H917L912.7 16.1Z M935.8 11.8H931.5L935.8 16.1Z M912.7 34H917L912.7 29.7Z M935.8 34H931.5L935.8 29.7Z"/>
</svg>
<div class="b" style="left:661px;top:501px;width:189px;height:6px;background:#262626;border:1px solid #2a2a2a;border-radius:3px"></div>
<div class="b" style="left:661px;top:502px;width:60px;height:4px;background:#2a7ba0;border-radius:2px 0 0 2px"></div>
<div class="b" style="left:719px;top:496px;width:14px;height:14px;background:linear-gradient(#484848,#3c3c3c);border:1px solid #222;border-radius:3px"></div>
<div class="b" style="left:1px;top:697px;width:1270px;height:1px;background:#2a2a2a"></div>
<div class="tab" style="left:2px;top:697px;width:74px;height:25px"></div>
<div class="tab sel" style="left:77px;top:696px;width:73px;height:28px"></div>
<div class="a" style="left:16px;top:703px;font-size:14px;letter-spacing:1px">关键侦</div>
<div class="a" style="left:92px;top:704px;font-size:14px;letter-spacing:1px">时间线</div>
<svg class="b" style="left:932px;top:402px" width="10" height="7"><path d="M1 0.5L4 3.5L1 6.5M5 0.5L8 3.5L5 6.5" fill="none" stroke="#2a2a2a" stroke-width="1.2"/></svg>
</body></html>
